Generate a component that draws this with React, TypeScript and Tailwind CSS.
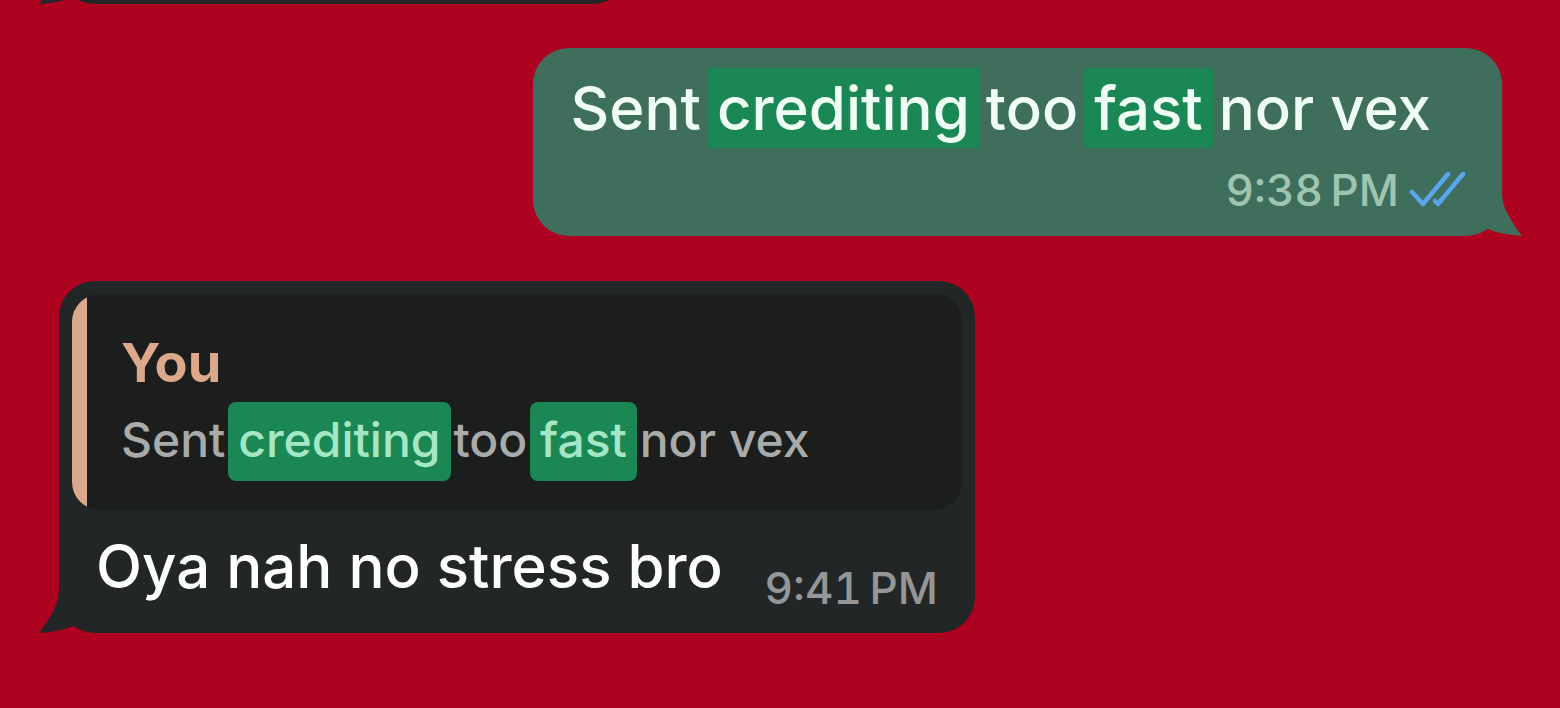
import type { ReactNode } from "react";

type Side = "in" | "out";

function Tail({ side }: { side: Side }) {
  return (
    <svg
      aria-hidden="true"
      viewBox="0 0 60 60"
      className={
        side === "out"
          ? "absolute -right-5 bottom-0 size-[60px] fill-[#406e5c]"
          : "absolute -left-5 bottom-0 size-[60px] -scale-x-100 fill-[#222626]"
      }
    >
      <path d="M40 0V12C40 26 42 32 48 42C53 51 57 56 60 60C47 59 34 57 24 52L8 36V0Z" />
    </svg>
  );
}

function Bubble({ side, className, children }: { side: Side; className: string; children?: ReactNode }) {
  const tone = side === "out" ? "bg-[#406e5c] self-end" : "bg-[#222626] self-start";
  return (
    <article className={`relative rounded-[36px] ${tone} ${className}`}>
      <Tail side={side} />
      {children}
    </article>
  );
}

function ReadTicks() {
  return (
    <svg
      role="img"
      aria-label="Read"
      viewBox="0 0 56 36"
      className="h-9 w-14 fill-none stroke-[#5aa5ee] stroke-[4.5]"
      strokeLinecap="round"
      strokeLinejoin="round"
    >
      <path d="M3 20L14 32L39 2" />
      <path d="M26 29L29 32L54 2" />
    </svg>
  );
}

function Mark({ quoted = false, children }: { quoted?: boolean; children: ReactNode }) {
  const look = quoted ? "rounded-lg pt-2 pb-3 text-[#a5e6c4]" : "rounded-sm py-1 text-inherit";
  return <mark className={`-mx-2.5 bg-[#1b8754] px-2.5 ${look}`}>{children}</mark>;
}

export default function App() {
  return (
    <main className="flex min-h-screen flex-col overflow-hidden bg-[#ad0321] pr-[58px] pl-[59px] font-['Inter','Liberation_Sans',sans-serif] font-medium whitespace-nowrap">
      <div className="flex h-1 flex-col justify-end">
        <Bubble side="in" className="h-20 w-[570px] shrink-0" />
      </div>

      <Bubble side="out" className="mt-11 px-[37px] pt-6 pb-5 text-[#effff6]">
        <p className="pr-[34px] text-[60px] leading-[72px]">
          Sent <Mark>crediting</Mark> too <Mark>fast</Mark> nor vex
        </p>
        <div className="flex items-center justify-end gap-2.5 pt-5 text-[44px] leading-[52px] text-[#9fc5b1] tabular-nums">
          <time>9:38{"\u202f"}PM</time>
          <ReadTicks />
        </div>
      </Bubble>

      <Bubble side="in" className="mt-[45px] w-[916px] p-[13px] text-white">
        <blockquote className="flex overflow-hidden rounded-[28px] bg-[#1c1e1d]">
          <div className="w-[15px] bg-[#dba88b]" />
          <div className="px-[34px] pt-[39px] pb-7">
            <cite className="block text-[54px] leading-[60px] font-bold text-[#dba88b] not-italic">You</cite>
            <p className="pt-[15px] pb-2.5 text-[48px] leading-[64px] text-[#a9aaaa]">
              Sent <Mark quoted>crediting</Mark> too <Mark quoted>fast</Mark> nor vex
            </p>
          </div>
        </blockquote>
        <div className="flex items-end justify-between px-6 pt-5 pb-1.5">
          <p className="mb-3 text-[60px] leading-[72px]">Oya nah no stress bro</p>
          <time className="text-[44px] leading-[52px] text-[#949697] tabular-nums">9:41{"\u202f"}PM</time>
        </div>
      </Bubble>
    </main>
  );
}
